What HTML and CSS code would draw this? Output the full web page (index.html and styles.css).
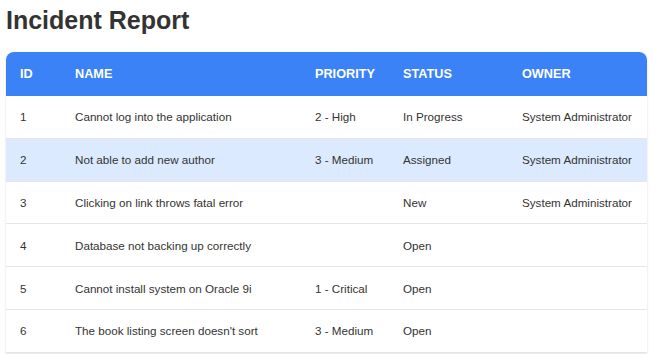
FILE: index.html
```html
<!DOCTYPE html>
<html lang="en">
  <head>
    <meta charset="UTF-8" />
    <title>Incident Report</title>
    <link rel="stylesheet" href="styles.css">
  </head>
  <body>
    <h1>Incident Report</h1>

    <div class="table-card">
      <table class="incidents">
        <thead>
          <tr>
            <th class="col-id">ID</th>
            <th class="col-name">Name</th>
            <th class="col-priority">Priority</th>
            <th class="col-status">Status</th>
            <th class="col-owner">Owner</th>
          </tr>
        </thead>
        <tbody>
          <tr>
            <td>1</td>
            <td>Cannot log into the application</td>
            <td>2 - High</td>
            <td>In Progress</td>
            <td>System Administrator</td>
          </tr>
          <tr class="selected">
            <td>2</td>
            <td>Not able to add new author</td>
            <td>3 - Medium</td>
            <td>Assigned</td>
            <td>System Administrator</td>
          </tr>
          <tr>
            <td>3</td>
            <td>Clicking on link throws fatal error</td>
            <td></td>
            <td>New</td>
            <td>System Administrator</td>
          </tr>
          <tr>
            <td>4</td>
            <td>Database not backing up correctly</td>
            <td></td>
            <td>Open</td>
            <td></td>
          </tr>
          <tr>
            <td>5</td>
            <td>Cannot install system on Oracle 9i</td>
            <td>1 - Critical</td>
            <td>Open</td>
            <td></td>
          </tr>
          <tr>
            <td>6</td>
            <td>The book listing screen doesn't sort</td>
            <td>3 - Medium</td>
            <td>Open</td>
            <td></td>
          </tr>
        </tbody>
      </table>
    </div>
  </body>
</html>
```

FILE: styles.css
```css
body {
  font-family: "Liberation Sans", Arial, sans-serif;
  margin: 0;
  padding: 6px;
  background: #fff;
  color: #333;
}

h1 {
  font-size: 25px;
  line-height: 29px;
  margin: 0 0 17px;
  color: #333;
}

.table-card {
  width: 641px;
  background: #fff;
  border-radius: 8px 8px 0 0;
  box-shadow: 0 1px 3px rgba(0, 0, 0, 0.12);
  overflow: hidden;
}

.incidents {
  width: 100%;
  border-collapse: collapse;
  table-layout: fixed;
  font-size: 11.65px;
}

.incidents th {
  background: #3b82f6; /* Blue header */
  color: #fff;
  font-size: 12.7px;
  font-weight: bold;
  text-transform: uppercase;
  text-align: left;
  height: 44px;
  padding: 0 14px;
}

.incidents td {
  height: 41.8px;
  padding: 0 14px;
  border-bottom: 1px solid #e5e5e5;
  color: #333;
  white-space: nowrap;
}

.incidents tr.selected td {
  background: #dbeafe;
}

.col-id {
  width: 27px;
}

.col-name {
  width: 212px;
}

.col-priority {
  width: 60px;
}

.col-status {
  width: 91px;
}

.col-owner {
  width: 111px;
}
```
